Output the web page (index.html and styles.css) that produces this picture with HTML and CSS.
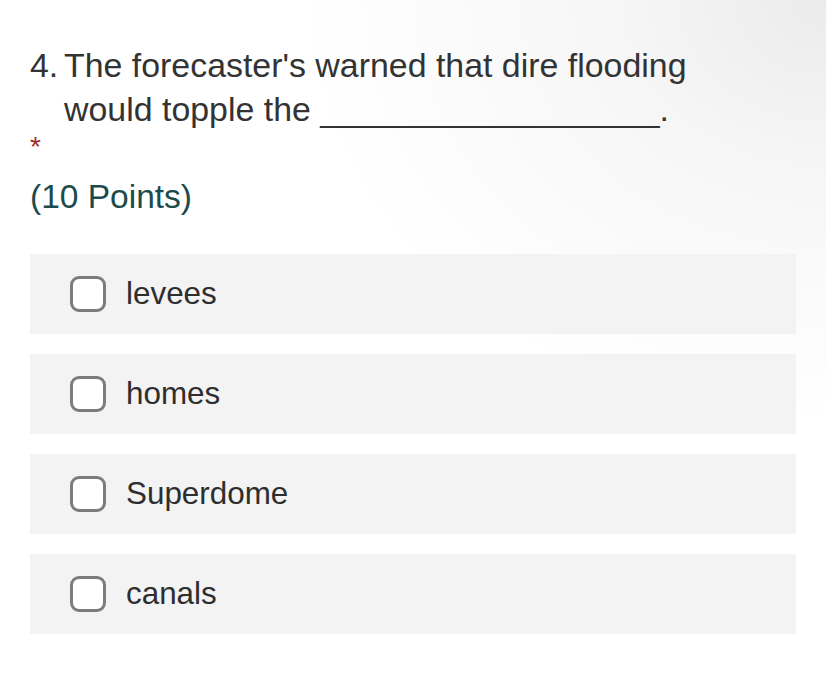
FILE: index.html
```html
<!DOCTYPE html>
<html lang="en">
<head>
<meta charset="utf-8">
<title>Question 4</title>
<link rel="stylesheet" href="styles.css">
</head>
<body>
<main class="page">
  <section class="question">
    <div class="title">
      <span class="num">4.</span>
      <span class="text">The forecaster's warned that dire flooding would topple the __________________.</span>
    </div>
    <div class="required">*</div>
    <div class="points">(10 Points)</div>
  </section>
  <ul class="options">
    <li class="option"><span class="check"></span><span class="label">levees</span></li>
    <li class="option"><span class="check"></span><span class="label">homes</span></li>
    <li class="option"><span class="check"></span><span class="label">Superdome</span></li>
    <li class="option"><span class="check"></span><span class="label">canals</span></li>
  </ul>
</main>
</body>
</html>
```
FILE: styles.css
```css
html, body {
  margin: 0;
  padding: 0;
  height: 100%;
}
body {
  font-family: "Liberation Sans", Arial, sans-serif;
  color: #333333;
  background: radial-gradient(ellipse 520px 420px at 100% 0%, #ebebeb 0%, #f6f6f6 40%, #ffffff 100%);
  background-color: #ffffff;
}
.page {
  padding: 43px 30px 0 30px;
  width: 766px;
}
.question {
  display: flex;
  flex-direction: column;
}
.title {
  display: flex;
  font-size: 33.9px;
  line-height: 44px;
  color: #333333;
}
.num {
  flex: 0 0 34px;
}
.text {
  flex: 1;
  padding-right: 100px;
}
.required {
  margin-top: 2px;
  font-size: 28px;
  line-height: 28px;
  color: #9e2b2b;
}
.points {
  margin-top: 14px;
  font-size: 33.5px;
  line-height: 44px;
  color: #1c4b4b;
}
.options {
  list-style: none;
  margin: 35px 0 0 0;
  padding: 0;
  display: flex;
  flex-direction: column;
  gap: 20px;
}
.option {
  height: 80px;
  background: #f3f3f3;
  display: flex;
  align-items: center;
  padding-left: 40px;
  gap: 20px;
}
.check {
  box-sizing: border-box;
  width: 36px;
  height: 36px;
  border: 3px solid #7c7c7c;
  border-radius: 9px;
  background: #ffffff;
  flex: 0 0 36px;
}
.label {
  font-size: 31.4px;
  line-height: 36px;
  color: #2e2e2e;
}
```
